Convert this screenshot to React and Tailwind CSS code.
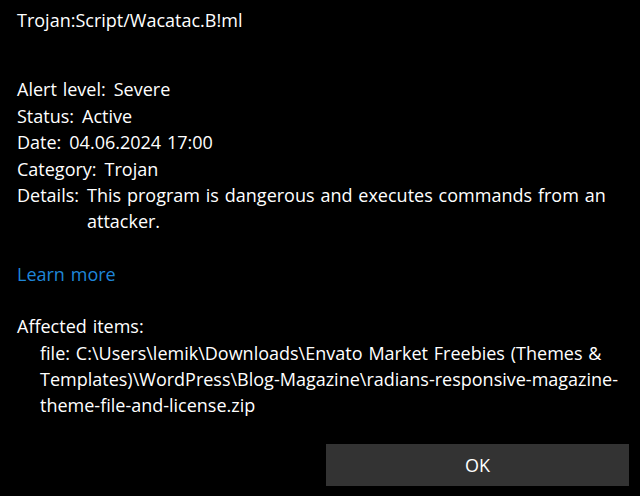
export default function App() {
  const rows = [
    ['Alert level:', 'Severe'],
    ['Status:', 'Active'],
    ['Date:', '04.06.2024 17:00'],
    ['Category:', 'Trojan'],
    ['Details:', 'This program is dangerous and executes commands from an attacker.'],
  ];

  return (
    <div className="w-[640px] h-[496px] bg-black text-white flex flex-col overflow-hidden font-['Segoe_UI','Open_Sans',sans-serif] text-[18px] leading-[26.4px] [word-spacing:1.2px]">
      <div className="px-4">
        <div className="pt-[7px] ml-px">Trojan:Script/Wacatac.B!ml</div>

        <div className="mt-[43px] ml-px">
          {rows.map(([label, value]) => (
            <div key={label} className="flex gap-[8px]">
              <span className="shrink-0">{label}</span>
              <span className="flex-1">{value}</span>
            </div>
          ))}
        </div>

        <a href="#" className="block mt-[26px] ml-px w-fit text-[#1f86d8]">
          Learn more
        </a>

        <div className="mt-[26px] ml-px">
          <div>Affected items:</div>
          <div className="pl-[23px]">
            file: C:\Users\lemik\Downloads\Envato Market Freebies (Themes &amp; Templates)\WordPress\Blog-Magazine\radians-responsive-magazine-theme-file-and-license.zip
          </div>
        </div>
      </div>

      <div className="mt-auto flex justify-end pr-[11px] pb-[10px]">
        <button className="w-[303px] h-[42px] bg-[#333333] text-white">OK</button>
      </div>
    </div>
  );
}
